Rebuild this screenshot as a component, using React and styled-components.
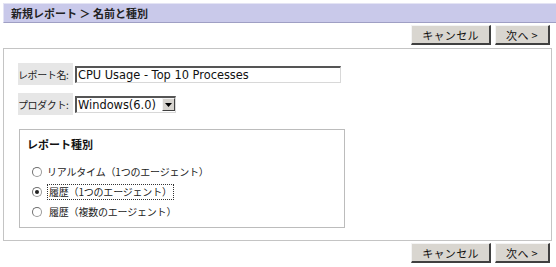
import React, { useState } from "react";
import styled, { createGlobalStyle } from "styled-components";

const GlobalStyle = createGlobalStyle`
  html, body {
    margin: 0;
    padding: 0;
    background: #ffffff;
  }
  body {
    font-family: "Noto Sans CJK JP", "DejaVu Sans", sans-serif;
    font-size: 11px;
    color: #000;
  }
`;

const reportTypes = [
  "リアルタイム（1つのエージェント）",
  "履歴（1つのエージェント）",
  "履歴（複数のエージェント）",
];

const App = () => {
  const [type, setType] = useState(1);
  const [name, setName] = useState("CPU Usage - Top 10 Processes");

  return (
    <React.Fragment>
      <GlobalStyle />
      <Page>
        <Header>新規レポート ＞ 名前と種別</Header>
        <ButtonRow>
          <Button $w={80}>キャンセル</Button>
          <Button $w={55}>次へ &gt;</Button>
        </ButtonRow>
        <Panel>
          <FieldRow>
            <Label>レポート名:</Label>
            <TextInput value={name} onChange={(e) => setName(e.target.value)} />
          </FieldRow>
          <FieldRow>
            <Label>プロダクト:</Label>
            <Select>
              <SelectText>Windows(6.0)</SelectText>
              <SelectArrow>
                <svg width="7" height="4" viewBox="0 0 7 4">
                  <polygon points="0,0 7,0 3.5,4" fill="#000" />
                </svg>
              </SelectArrow>
            </Select>
          </FieldRow>
          <TypeBox>
            <TypeTitle>レポート種別</TypeTitle>
            <RadioList>
              {reportTypes.map((t, i) => (
                <RadioRow key={t} onClick={() => setType(i)}>
                  <Radio $checked={type === i} />
                  <RadioText $focus={type === i} $first={i === 0}>
                    {t}
                  </RadioText>
                </RadioRow>
              ))}
            </RadioList>
          </TypeBox>
        </Panel>
        <ButtonRow>
          <Button $w={80}>キャンセル</Button>
          <Button $w={55}>次へ &gt;</Button>
        </ButtonRow>
      </Page>
    </React.Fragment>
  );
};

export default App;

const Page = styled.div`
  width: 556px;
  height: 267px;
  padding: 3px 0 0 3px;
  box-sizing: border-box;
  display: flex;
  flex-direction: column;
`;

const Header = styled.div`
  height: 20px;
  box-sizing: border-box;
  background: #c9c9ea;
  border-top: 1px solid #e4e4f4;
  border-left: 1px solid #e4e4f4;
  border-bottom: 1px solid #9f9fc4;
  padding-left: 7px;
  font-weight: bold;
  font-size: 11px;
  line-height: 18px;
  color: #222;
`;

const ButtonRow = styled.div`
  display: flex;
  justify-content: flex-end;
  gap: 4px;
  padding-right: 6px;
  margin: 2px 0 3px;
`;

const Button = styled.div`
  width: ${(p) => p.$w}px;
  height: 20px;
  box-sizing: border-box;
  background: #d9d6d0;
  border-top: 1px solid #f4f4f4;
  border-left: 1px solid #f4f4f4;
  border-right: 2px solid #404040;
  border-bottom: 2px solid #404040;
  display: flex;
  align-items: center;
  justify-content: center;
  font-size: 11px;
  letter-spacing: 0.3px;
  color: #111;
  white-space: nowrap;
`;

const Panel = styled.div`
  width: 549px;
  height: 193px;
  box-sizing: border-box;
  border: 1px solid #c4c4c4;
  padding: 14px 0 0 14px;
  display: flex;
  flex-direction: column;
  gap: 8px;
`;

const FieldRow = styled.div`
  display: flex;
  align-items: center;
  gap: 2px;
`;

const Label = styled.div`
  width: 55px;
  height: 22px;
  background: #e6e6e6;
  display: flex;
  align-items: center;
  font-size: 10px;
  letter-spacing: -0.4px;
  white-space: nowrap;
  overflow: hidden;
  color: #222;
`;

const TextInput = styled.input`
  width: 266px;
  height: 17px;
  box-sizing: border-box;
  border-top: 2px solid #555;
  border-left: 2px solid #555;
  border-right: 1px solid #d8d8d8;
  border-bottom: 1px solid #d8d8d8;
  padding: 0 1px;
  font-family: "DejaVu Sans", sans-serif;
  font-size: 11.4px;
  color: #111;
  outline: none;
`;

const Select = styled.div`
  width: 101px;
  height: 17px;
  box-sizing: border-box;
  border-top: 2px solid #555;
  border-left: 2px solid #555;
  border-right: 1px solid #d8d8d8;
  border-bottom: 1px solid #d8d8d8;
  display: flex;
  align-items: center;
  justify-content: space-between;
  background: #fff;
`;

const SelectText = styled.span`
  font-family: "DejaVu Sans", sans-serif;
  font-size: 11.4px;
  padding-left: 1px;
  color: #111;
  white-space: nowrap;
`;

const SelectArrow = styled.span`
  width: 13px;
  height: 13px;
  box-sizing: border-box;
  background: #d6d3ce;
  border-top: 1px solid #f4f4f4;
  border-left: 1px solid #f4f4f4;
  border-right: 1px solid #404040;
  border-bottom: 1px solid #404040;
  display: flex;
  align-items: center;
  justify-content: center;
`;

const TypeBox = styled.div`
  width: 326px;
  height: 99px;
  box-sizing: border-box;
  margin: 6px 0 0 1px;
  border: 1px solid #bcbcbc;
  padding: 6px 0 0 7px;
`;

const TypeTitle = styled.div`
  font-weight: bold;
  font-size: 11px;
  color: #111;
  line-height: 16px;
`;

const RadioList = styled.div`
  display: flex;
  flex-direction: column;
  gap: 4px;
  margin: 12px 0 0 5px;
`;

const RadioRow = styled.div`
  display: flex;
  align-items: center;
  gap: 3px;
  height: 16px;
  cursor: default;
`;

const Radio = styled.span`
  width: 8px;
  height: 8px;
  border-radius: 50%;
  border: 1px solid #9a9a9a;
  border-top-color: #707070;
  border-left-color: #707070;
  background: #fff;
  display: flex;
  align-items: center;
  justify-content: center;
  &::after {
    content: "";
    width: 4px;
    height: 4px;
    border-radius: 50%;
    background: ${(p) => (p.$checked ? "#222" : "transparent")};
  }
`;

const RadioText = styled.span`
  font-size: 10px;
  letter-spacing: -0.2px;
  color: #222;
  line-height: 14px;
  padding: 0 1px;
  margin-left: ${(p) => (p.$first ? "0" : "2px")};
  border: 1px dotted ${(p) => (p.$focus ? "#333" : "transparent")};
  white-space: nowrap;
`;
